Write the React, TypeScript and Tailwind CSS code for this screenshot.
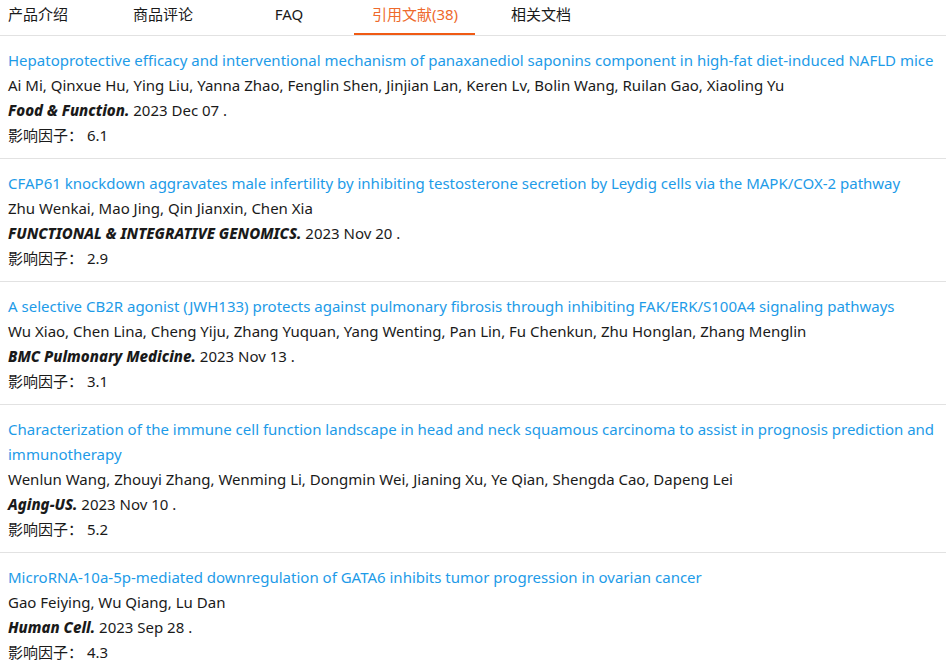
import React from 'react';

type Citation = {
  title: string;
  authors: string;
  journal: string;
  date: string;
  impact: string;
};

const tabs = ['产品介绍', '商品评论', 'FAQ', '引用文献(38)', '相关文档'];

const citations: Citation[] = [
  {
    title:
      'Hepatoprotective efficacy and interventional mechanism of panaxanediol saponins component in high-fat diet-induced NAFLD mice',
    authors:
      'Ai Mi, Qinxue Hu, Ying Liu, Yanna Zhao, Fenglin Shen, Jinjian Lan, Keren Lv, Bolin Wang, Ruilan Gao, Xiaoling Yu',
    journal: 'Food & Function.',
    date: '2023 Dec 07 .',
    impact: '6.1',
  },
  {
    title:
      'CFAP61 knockdown aggravates male infertility by inhibiting testosterone secretion by Leydig cells via the MAPK/COX-2 pathway',
    authors: 'Zhu Wenkai, Mao Jing, Qin Jianxin, Chen Xia',
    journal: 'FUNCTIONAL & INTEGRATIVE GENOMICS.',
    date: '2023 Nov 20 .',
    impact: '2.9',
  },
  {
    title:
      'A selective CB2R agonist (JWH133) protects against pulmonary fibrosis through inhibiting FAK/ERK/S100A4 signaling pathways',
    authors:
      'Wu Xiao, Chen Lina, Cheng Yiju, Zhang Yuquan, Yang Wenting, Pan Lin, Fu Chenkun, Zhu Honglan, Zhang Menglin',
    journal: 'BMC Pulmonary Medicine.',
    date: '2023 Nov 13 .',
    impact: '3.1',
  },
  {
    title:
      'Characterization of the immune cell function landscape in head and neck squamous carcinoma to assist in prognosis prediction and immunotherapy',
    authors:
      'Wenlun Wang, Zhouyi Zhang, Wenming Li, Dongmin Wei, Jianing Xu, Ye Qian, Shengda Cao, Dapeng Lei',
    journal: 'Aging-US.',
    date: '2023 Nov 10 .',
    impact: '5.2',
  },
  {
    title: 'MicroRNA-10a-5p-mediated downregulation of GATA6 inhibits tumor progression in ovarian cancer',
    authors: 'Gao Feiying, Wu Qiang, Lu Dan',
    journal: 'Human Cell.',
    date: '2023 Sep 28 .',
    impact: '4.3',
  },
];

export default function App() {
  return (
    <div className="w-[946px] bg-white text-[15px] leading-[25px] text-[#1a1a1a] font-['Noto_Sans','Noto_Sans_CJK_SC',sans-serif]">
      <div className="flex h-[36px] border-b border-[#e2e2e2]">
        {tabs.map((tab, i) => {
          const active = i === 3;
          return (
            <div
              key={tab}
              className={
                i === 0
                  ? 'relative w-[100px] pl-2 pt-[2px] text-[15px] text-[#1a1a1a]'
                  : 'relative w-[126px] pt-[2px] text-center text-[15px] ' + (active ? 'text-[#ee6a2c]' : 'text-[#1a1a1a]')
              }
            >
              {tab}
              {active && <div className="absolute bottom-[0px] left-[2px] h-[2px] w-[121px] bg-[#f05a14]" />}
            </div>
          );
        })}
      </div>
      {citations.map((c) => (
        <div key={c.title} className="border-b border-[#e2e2e2] pl-2 pr-2 pt-3 pb-[10px]">
          <div className="text-[#1d9be8]">{c.title}</div>
          <div>{c.authors}</div>
          <div>
            <span className="font-extrabold italic">{c.journal}</span> {c.date}
          </div>
          <div>影响因子： {c.impact}</div>
        </div>
      ))}
    </div>
  );
}
